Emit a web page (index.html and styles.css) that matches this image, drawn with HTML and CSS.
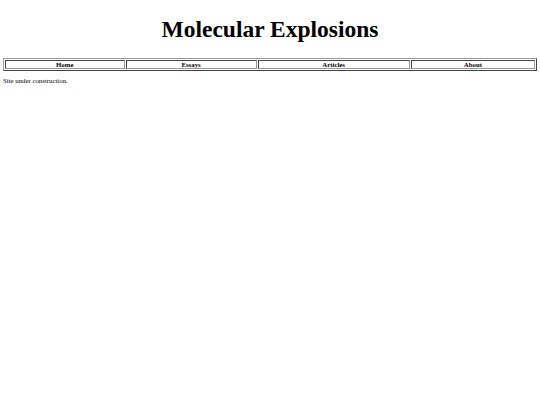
FILE: index.html
```html
<!DOCTYPE html>
<html>
<head>
<meta charset="utf-8">
<title>Molecular Explosions</title>
<link rel="stylesheet" href="styles.css">
</head>
<body>
<h1 class="title">Molecular Explosions</h1>
<table class="nav">
<tr>
<th class="nav-cell">Home</th>
<th class="nav-cell">Essays</th>
<th class="nav-cell">Articles</th>
<th class="nav-cell">About</th>
</tr>
</table>
<p class="note">Site under construction.</p>
</body>
</html>
```
FILE: styles.css
```css
html {
  background: #ffffff;
}
body {
  margin: 3px;
  font-family: "Liberation Serif", "Times New Roman", serif;
  font-size: 6.8px;
  color: #000000;
}
.title {
  font-size: 23.5px;
  font-weight: bold;
  text-align: center;
  margin: 13px 0 15px 0;
}
.nav {
  width: 100%;
  border: 1px outset #999999;
  border-spacing: 1px;
  border-collapse: separate;
}
.nav-cell {
  border: 1px inset #999999;
  padding: 0;
  line-height: 7px;
  font-size: 6.8px;
  font-weight: bold;
  text-align: center;
}
.note {
  margin: 6px 0;
}
```
